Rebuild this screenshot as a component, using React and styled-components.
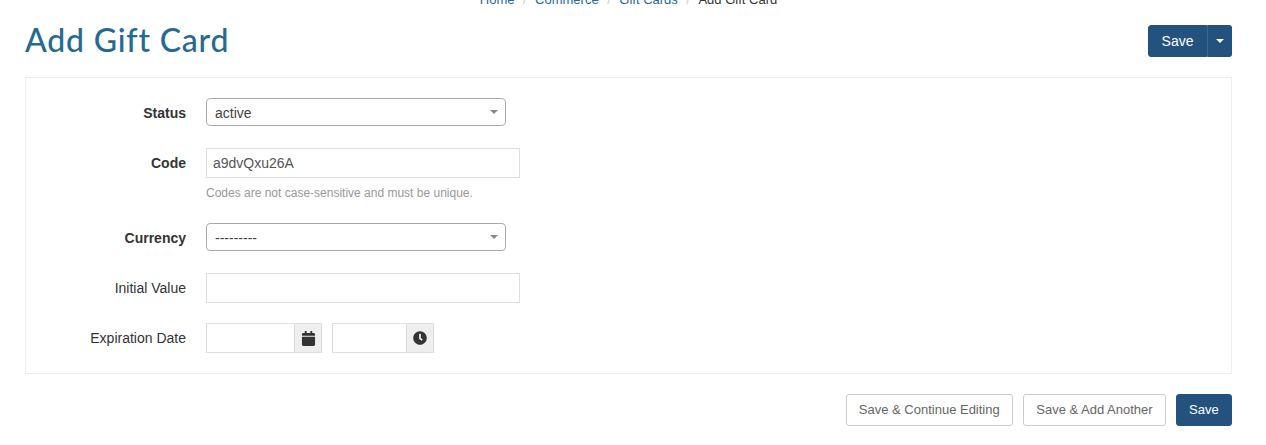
import React from "react";
import styled, { createGlobalStyle } from "styled-components";
import { FaCalendar, FaClock } from "react-icons/fa";

const GlobalStyle = createGlobalStyle`
    html, body {
        margin: 0;
        padding: 0;
        background: #fff;
        overflow: hidden;
    }
    body {
        font-family: "Liberation Sans", Arial, sans-serif;
        color: #333;
    }
`;

const Page = styled.div`
    box-sizing: border-box;
    width: 1266px;
    height: 445px;
    padding: 0 34px 0 25px;
    overflow: hidden;
`;

const Breadcrumb = styled.nav`
    display: flex;
    justify-content: center;
    align-items: center;
    height: 16px;
    margin-top: -8px;
    font-size: 13px;
    line-height: 16px;
    color: #333;
`;

const Crumb = styled.a`
    color: #266a94;
    text-decoration: none;
`;

const Slash = styled.span`
    margin: 0 8.5px;
    color: #ccc;
`;

const Header = styled.header`
    display: flex;
    justify-content: space-between;
    align-items: center;
    height: 32px;
    margin-top: 17px;
    margin-bottom: 20px;
`;

const Title = styled.h1`
    margin: 0 0 2px;
    font-family: Lato, "Open Sans", sans-serif;
    font-size: 32px;
    font-weight: 500;
    letter-spacing: 0.8px;
    line-height: 32px;
    color: #266a94;
`;

const SplitGroup = styled.div`
    display: flex;
    height: 32px;
`;

const Button = styled.button`
    box-sizing: border-box;
    height: 32px;
    padding: ${props => (props.$wide ? "0 12.5px" : "0 12.25px 2px")};
    font-family: inherit;
    font-size: ${props => (props.$wide ? "14px" : "13px")};
    border-radius: 3px;
    border: 1px solid ${props => (props.$primary ? "#24527f" : "#ccc")};
    background: ${props => (props.$primary ? "#24527f" : "#fff")};
    color: ${props => (props.$primary ? "#fff" : "#666")};
`;

const SplitMain = styled(Button)`
    border-radius: 3px 0 0 3px;
`;

const SplitCaret = styled(Button)`
    display: flex;
    align-items: center;
    justify-content: center;
    width: 25px;
    padding: 0;
    border-radius: 0 3px 3px 0;
    border-left-color: #3c6794;

    &::before {
        content: "";
        border-top: 4px solid #fff;
        border-left: 4px solid transparent;
        border-right: 4px solid transparent;
    }
`;

const Card = styled.section`
    box-sizing: border-box;
    height: 297px;
    padding: 20px 0 0;
    border: 1px solid #eee;
`;

const Row = styled.div`
    display: flex;
    align-items: ${props => (props.$hasHelp ? "flex-start" : "center")};
    gap: 20px;
    margin-bottom: ${props => props.$gap}px;
`;

const Label = styled.label`
    flex: 0 0 160px;
    text-align: right;
    font-size: 14px;
    line-height: ${props => props.$line || 20}px;
    padding-top: ${props => (props.$nudge ? 2 : 0)}px;
    font-weight: ${props => (props.$required ? 700 : 400)};
    color: #333;
`;

const SelectWrap = styled.div`
    position: relative;
    width: 300px;
    height: 28px;

    &::after {
        content: "";
        position: absolute;
        top: 12px;
        right: 8px;
        border-top: 4px solid #888;
        border-left: 4px solid transparent;
        border-right: 4px solid transparent;
        pointer-events: none;
    }
`;

const Select = styled.select`
    box-sizing: border-box;
    display: block;
    width: 100%;
    height: 100%;
    padding: 2px 8px 0;
    appearance: none;
    background: #fff;
    border: 1px solid #aaa;
    border-radius: 4px;
    font-family: inherit;
    font-size: 14px;
    color: #444;
`;

const Field = styled.div`
    display: flex;
    flex-direction: column;
`;

const Input = styled.input`
    box-sizing: border-box;
    display: block;
    width: ${props => props.$width}px;
    height: 30px;
    padding: 0 6px;
    border: 1px solid #ddd;
    border-right-width: ${props => (props.$joined ? 0 : 1)}px;
    outline: none;
    font-family: inherit;
    font-size: 14px;
    color: #555;
`;

const Help = styled.div`
    margin-top: 8px;
    font-size: 12px;
    line-height: 14px;
    color: #999;
`;

const Pickers = styled.div`
    display: flex;
    gap: 10px;
`;

const Picker = styled.div`
    display: flex;
`;

const Addon = styled.span`
    box-sizing: border-box;
    display: flex;
    align-items: center;
    justify-content: center;
    width: 28px;
    height: 30px;
    background: #eee;
    border: 1px solid #ddd;
    color: #333;
    font-size: ${props => props.$size}px;
`;

const Actions = styled.footer`
    display: flex;
    justify-content: flex-end;
    gap: 10px;
    margin-top: 20px;
`;

const App = () => (
    <Page>
        <GlobalStyle />
        <Breadcrumb>
            <Crumb href="#">Home</Crumb>
            <Slash>/</Slash>
            <Crumb href="#">Commerce</Crumb>
            <Slash>/</Slash>
            <Crumb href="#">Gift Cards</Crumb>
            <Slash>/</Slash>
            <span>Add Gift Card</span>
        </Breadcrumb>
        <Header>
            <Title>Add Gift Card</Title>
            <SplitGroup>
                <SplitMain $primary $wide>Save</SplitMain>
                <SplitCaret $primary aria-label="More save options" />
            </SplitGroup>
        </Header>
        <Card>
            <Row $gap={22}>
                <Label $required $nudge>Status</Label>
                <SelectWrap>
                    <Select defaultValue="active">
                        <option value="active">active</option>
                    </Select>
                </SelectWrap>
            </Row>
            <Row $gap={23} $hasHelp>
                <Label $required $line={30}>Code</Label>
                <Field>
                    <Input $width={314} defaultValue="a9dvQxu26A" />
                    <Help>Codes are not case-sensitive and must be unique.</Help>
                </Field>
            </Row>
            <Row $gap={22}>
                <Label $required $nudge>Currency</Label>
                <SelectWrap>
                    <Select defaultValue="">
                        <option value="">---------</option>
                    </Select>
                </SelectWrap>
            </Row>
            <Row $gap={20}>
                <Label>Initial Value</Label>
                <Input $width={314} />
            </Row>
            <Row $gap={0}>
                <Label>Expiration Date</Label>
                <Pickers>
                    <Picker>
                        <Input $width={88} $joined />
                        <Addon $size={15}><FaCalendar /></Addon>
                    </Picker>
                    <Picker>
                        <Input $width={74} $joined />
                        <Addon $size={14}><FaClock /></Addon>
                    </Picker>
                </Pickers>
            </Row>
        </Card>
        <Actions>
            <Button>Save &amp; Continue Editing</Button>
            <Button>Save &amp; Add Another</Button>
            <Button $primary>Save</Button>
        </Actions>
    </Page>
);

export default App;
